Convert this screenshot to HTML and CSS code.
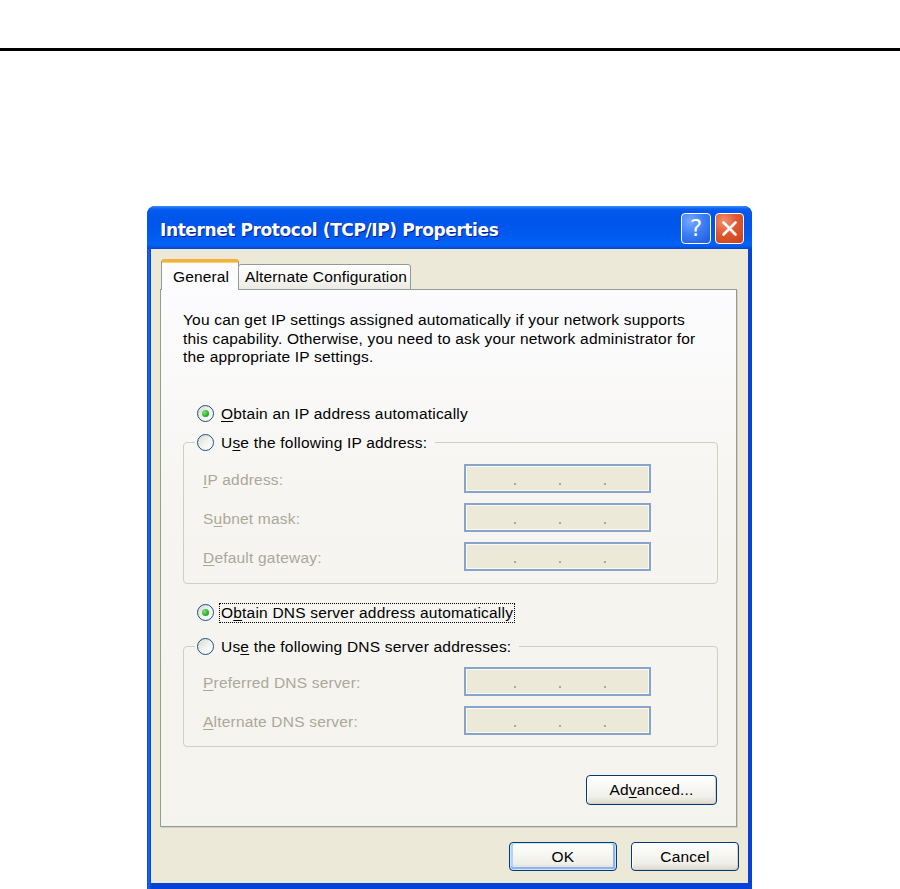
FILE: index.html
```html
<!DOCTYPE html>
<html>
<head>
<meta charset="utf-8">
<title>Internet Protocol (TCP/IP) Properties</title>
<link rel="stylesheet" href="styles.css">
</head>
<body>
<div class="rule"></div>
<div class="window">
  <div class="titlebar">
    <span class="title">Internet Protocol (TCP/IP) Properties</span>
    <div class="caption-btns">
      <div class="cbtn help">?</div>
      <div class="cbtn close">
        <svg width="17" height="17" viewBox="0 0 17 17"><path d="M2.5 2.5 L14.5 14.5 M14.5 2.5 L2.5 14.5" stroke="#fff" stroke-width="2.6" stroke-linecap="round"/></svg>
      </div>
    </div>
  </div>
  <div class="client">
    <div class="tabs">
      <div class="tab active">General</div>
      <div class="tab">Alternate Configuration</div>
    </div>
    <div class="panel">
      <p class="intro">You can get IP settings assigned automatically if your network supports<br>this capability. Otherwise, you need to ask your network administrator for<br>the appropriate IP settings.</p>

      <div class="radio-row r-ip-auto"><span class="radio checked"></span><span class="rlabel"><u>O</u>btain an IP address automatically</span></div>

      <fieldset class="group g-ip">
        <legend class="radio-row"><span class="radio"></span><span class="rlabel">U<u>s</u>e the following IP address:</span></legend>
        <div class="fields">
          <span class="flabel"><u>I</u>P address:</span>
          <span class="ipbox"><i></i><i></i><i></i></span>
          <span class="flabel">S<u>u</u>bnet mask:</span>
          <span class="ipbox"><i></i><i></i><i></i></span>
          <span class="flabel"><u>D</u>efault gateway:</span>
          <span class="ipbox"><i></i><i></i><i></i></span>
        </div>
      </fieldset>

      <div class="radio-row r-dns-auto"><span class="radio checked"></span><span class="rlabel focus">O<u>b</u>tain DNS server address automatically</span></div>

      <fieldset class="group g-dns">
        <legend class="radio-row"><span class="radio"></span><span class="rlabel">Us<u>e</u> the following DNS server addresses:</span></legend>
        <div class="fields">
          <span class="flabel"><u>P</u>referred DNS server:</span>
          <span class="ipbox"><i></i><i></i><i></i></span>
          <span class="flabel"><u>A</u>lternate DNS server:</span>
          <span class="ipbox"><i></i><i></i><i></i></span>
        </div>
      </fieldset>

      <div class="adv-row"><button class="btn adv">Ad<u>v</u>anced...</button></div>
    </div>
    <div class="footer">
      <button class="btn default">OK</button>
      <button class="btn">Cancel</button>
    </div>
  </div>
</div>
</body>
</html>
```

FILE: styles.css
```css
html, body {
  margin: 0;
  padding: 0;
  background: #fff;
}
body {
  font-family: "Liberation Sans", Arial, sans-serif;
  font-size: 15.5px;
  letter-spacing: 0.2px;
  color: #000;
  overflow: hidden;
}
u { text-decoration: underline; text-underline-offset: 2px; }

.rule {
  margin-top: 48px;
  height: 3px;
  background: #000;
}

.window {
  margin: 155px 0 0 147px;
  width: 605px;
  height: 683px;
  display: flex;
  flex-direction: column;
  border-radius: 8px 8px 0 0;
  background: linear-gradient(to right, #0a3fd0 0, #1662ee 1.5px, #0856e8 3px, #0641d8 4px);
  box-sizing: border-box;
  overflow: hidden;
}

.titlebar {
  height: 43px;
  flex: 0 0 43px;
  display: flex;
  align-items: center;
  justify-content: space-between;
  padding: 0 8px 0 13px;
  border-radius: 8px 8px 0 0;
  background: linear-gradient(to bottom,
    #3b8cfb 0, #0a5ef0 3px, #0058ee 6px, #0055ea 14px, #0058ee 26px,
    #005ff2 34px, #0563f6 38px, #0456ea 41px, #0040cf 43px);
}
.title {
  font-family: "DejaVu Sans", sans-serif;
  font-weight: bold;
  font-size: 17px;
  color: #fff;
  letter-spacing: -0.4px;
  text-shadow: 1px 1px 0 #0a1e8c;
  margin-top: 4px;
}
.caption-btns {
  display: flex;
  gap: 4px;
  align-self: flex-start;
  margin-top: 7px;
}
.cbtn {
  box-sizing: border-box;
  width: 30px;
  height: 31px;
  border: 1px solid #fff;
  border-radius: 4px;
  display: flex;
  align-items: center;
  justify-content: center;
}
.help {
  background: radial-gradient(circle at 30% 25%, #7aa8ff 0, #3b7ff5 45%, #2058df 100%);
  color: #fff;
  font-family: "DejaVu Sans", sans-serif;
  font-size: 23px;
  letter-spacing: 0;
  line-height: 1;
}
.close {
  width: 29px;
  background: radial-gradient(circle at 30% 25%, #f09070 0, #e0582f 45%, #c8401a 100%);
}

.client {
  flex: 1;
  margin: 0 4px 6px 4px;
  background: #ece9d8;
  padding: 10px 10px 0 9px;
  display: flex;
  flex-direction: column;
}

.tabs {
  display: flex;
  align-items: flex-end;
  margin-bottom: -1px;
  position: relative;
  z-index: 1;
  padding-left: 1px;
}
.tab {
  box-sizing: border-box;
  height: 26px;
  border: 1px solid #919b9c;
  border-radius: 3px 3px 0 0;
  background: linear-gradient(to bottom, #fefefe 0, #f7f7f4 50%, #ebeae3 100%);
  padding: 0 5px 0 6px;
  display: flex;
  align-items: center;
  width: 173px;
  white-space: nowrap;
  letter-spacing: 0.15px;
}
.tab.active {
  width: 78px;
  height: 31px;
  padding: 1px 0 0 11px;
  border-top: 3px solid #f5b03e;
  border-bottom: none;
  background: #fcfcfe;
  box-shadow: inset 0 1px 0 #ffd46a;
  margin-right: -1px;
  position: relative;
  z-index: 2;
}

.panel {
  box-sizing: border-box;
  width: 577px;
  height: 538px;
  border: 1px solid #919b9c;
  box-shadow: 1px 1px 0 #d0d0bf;
  background: linear-gradient(to bottom, #fcfcfe 0, #f6f5f1 40%, #f4f3ee 100%);
  padding: 0 18px 0 22px;
  display: flex;
  flex-direction: column;
}

.intro {
  margin: 21px 0 0 0;
  line-height: 18.5px;
  white-space: nowrap;
}

.radio-row {
  display: flex;
  align-items: center;
  height: 22px;
  white-space: nowrap;
}
.radio {
  box-sizing: border-box;
  width: 17px;
  height: 17px;
  border: 1px solid #1c5180;
  border-radius: 50%;
  background: linear-gradient(135deg, #d9d9d2 0, #f4f4f0 55%, #ffffff 100%);
  margin-right: 7px;
  display: flex;
  align-items: center;
  justify-content: center;
  flex: none;
}
.radio.checked::after {
  content: "";
  width: 7px;
  height: 7px;
  border-radius: 50%;
  background: radial-gradient(circle at 35% 35%, #7ce37a 0, #2fb52e 55%, #1a8f1a 100%);
}
.r-ip-auto {
  margin: 36px 0 0 14px;
}
.r-dns-auto {
  margin: 18px 0 0 14px;
}
.rlabel.focus {
  outline: 1px dotted #000;
  outline-offset: 0;
  padding: 0 1px;
  margin-left: -1px;
  line-height: 18px;
}

.group {
  margin: 0;
  border: 1px solid #d0d0bf;
  border-radius: 4px;
  padding: 10px 0 12px 19px;
  min-width: 0;
}
.group legend {
  padding: 0 8px 0 2px;
  margin-left: -8px;
}
.g-ip { margin-top: 7px; }
.g-dns { margin-top: 12px; padding-top: 9px; padding-bottom: 11px; }

.fields {
  display: grid;
  grid-template-columns: 261px 187px;
  grid-auto-rows: 29px;
  row-gap: 10px;
  align-items: center;
}
.flabel {
  color: #aca899;
  padding-top: 3px;
}
.ipbox {
  box-sizing: border-box;
  height: 29px;
  border: 2px solid #89a4c9;
  box-shadow: inset 0 0 0 1px #f9f9f6;
  background: #ece9d8;
  display: flex;
  align-items: flex-end;
  padding: 0 0 6px 48px;
  gap: 43px;
}
.ipbox i {
  display: block;
  width: 2px;
  height: 2px;
  background: #aca899;
}

.adv-row {
  display: flex;
  justify-content: flex-end;
  margin-top: 28px;
  padding-right: 1px;
}

.btn {
  box-sizing: border-box;
  font-family: inherit;
  font-size: 15.5px;
  letter-spacing: 0.2px;
  color: #000;
  border: 1px solid #003c74;
  border-radius: 4px;
  background: linear-gradient(to bottom, #ffffff 0, #f7f7f4 40%, #f0efe8 75%, #dcd8cc 100%);
  box-shadow: inset -1px -1px 0 #d6d0c5, inset 1px 1px 0 #fff;
  padding: 0;
  height: 29px;
  width: 108px;
}
.btn.adv {
  width: 131px;
  height: 30px;
}
.btn.default {
  box-shadow: inset 0 0 0 1px #cee7ff, inset 0 -2px 0 1px #8fb2f0, inset 2px 0 0 1px #b5d0f8, inset -2px 0 0 1px #8fb2f0;
}

.footer {
  display: flex;
  justify-content: flex-end;
  gap: 14px;
  margin-top: 15px;
  margin-right: -1px;
}
```
